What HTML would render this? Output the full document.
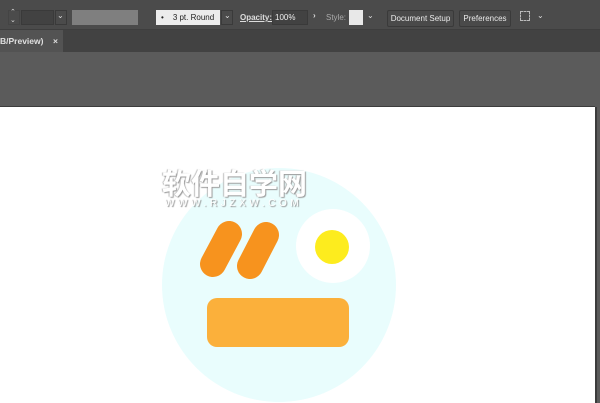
<!DOCTYPE html>
<html><head><meta charset="utf-8">
<style>
*{margin:0;padding:0;box-sizing:border-box}
body{width:600px;height:403px;overflow:hidden;background:#5b5b5b;position:relative;font-family:"Liberation Sans",sans-serif}
.abs{position:absolute}
.tb{left:0;top:0;width:600px;height:30px;background:#4b4b4b;border-bottom:1px solid #3e3e3e}
.box{position:absolute;border:1px solid #3a3a3a;background:#424242}
.btn{position:absolute;top:9px;height:17px;border:1px solid #3a3a3a;border-radius:2px;background:#4a4a4a;color:#eaeaea;font-size:8px;line-height:15px;text-align:center}
.chev{position:absolute;color:#ddd;font-size:8px}
.lbl{position:absolute;color:#cfcfcf;font-size:8px;top:13px}
</style></head><body>
<div class="abs tb"></div>
<div class="box" style="left:8px;top:10px;width:12px;height:15px;background:#4b4b4b;border-color:#444"></div>
<div class="abs" style="left:10px;top:9px;color:#ddd;font-size:7px;line-height:8px">⌃<br>⌄</div>
<div class="box" style="left:21px;top:10px;width:33px;height:15px"></div>
<div class="box" style="left:55px;top:10px;width:12px;height:15px;background:#4b4b4b"></div>
<div class="chev" style="left:57px;top:11px">⌄</div>
<div class="abs" style="left:72px;top:10px;width:66px;height:15px;background:#7f7f7f"></div>
<div class="abs" style="left:156px;top:10px;width:64px;height:15px;background:#ececec;color:#222;font-size:8px;line-height:15px"><span style="margin-left:5px">•</span><span style="margin-left:9px">3 pt. Round</span></div>
<div class="box" style="left:221px;top:10px;width:12px;height:15px;background:#4b4b4b"></div>
<div class="chev" style="left:224px;top:11px">⌄</div>
<div class="lbl" style="left:240px;text-decoration:underline;color:#ddd;font-weight:bold">Opacity:</div>
<div class="box" style="left:272px;top:10px;width:36px;height:15px;color:#eee;font-size:8px;line-height:13px;padding-left:2px">100%</div>
<div class="chev" style="left:313px;top:11px;font-weight:bold">›</div>
<div class="lbl" style="left:326px;color:#aaa">Style:</div>
<div class="abs" style="left:349px;top:10px;width:14px;height:15px;background:#e8e8e8"></div>
<div class="chev" style="left:367px;top:11px">⌄</div>
<div class="btn" style="left:387px;width:67px;top:10px">Document Setup</div>
<div class="btn" style="left:459px;width:52px;top:10px">Preferences</div>
<div class="abs" style="left:520px;top:11px;width:10px;height:10px;border:1px dashed #bbb"></div>
<div class="chev" style="left:537px;top:11px">⌄</div>
<div class="abs" style="left:0;top:30px;width:600px;height:22px;background:#424242"></div>
<div class="abs" style="left:0;top:30px;width:63px;height:22px;background:#535353;color:#e0e0e0;font-size:8.5px;line-height:22px;font-weight:bold">B/Preview)<span style="position:absolute;left:53px;font-weight:bold">×</span></div>
<div class="abs" style="left:0;top:106px;width:595px;height:297px;background:#fff;border-top:1px solid #3c3c3c"></div>
<div class="abs" style="left:595px;top:107px;width:2px;height:296px;background:#3c3c3c"></div>
<svg class="abs" style="left:0;top:0" width="600" height="403">
<circle cx="279" cy="285" r="117" fill="#e9fdfd"/>
<circle cx="333" cy="246" r="37" fill="#fff"/>
<circle cx="332" cy="247" r="17" fill="#fdec1e"/>
<line x1="229" y1="234" x2="213" y2="264" stroke="#f7931e" stroke-width="26" stroke-linecap="round"/>
<line x1="266" y1="235" x2="250" y2="266" stroke="#f7931e" stroke-width="26" stroke-linecap="round"/>
<rect x="207" y="298" width="142" height="49" rx="10" fill="#fbb03b"/>
</svg>
<div class="abs" style="left:162px;top:170px;font-family:'Liberation Sans','Noto Sans CJK SC',sans-serif;font-size:29px;font-weight:bold;color:#fff;line-height:30px;text-shadow:1px 1px 1px #999,-1px 0 1px #bbb">软件自学网</div>
<div class="abs" style="left:165px;top:198px;font-size:10px;letter-spacing:3.6px;color:#fff;text-shadow:1px 1px 1px #888">WWW.RJZXW.COM</div>
</body></html>
